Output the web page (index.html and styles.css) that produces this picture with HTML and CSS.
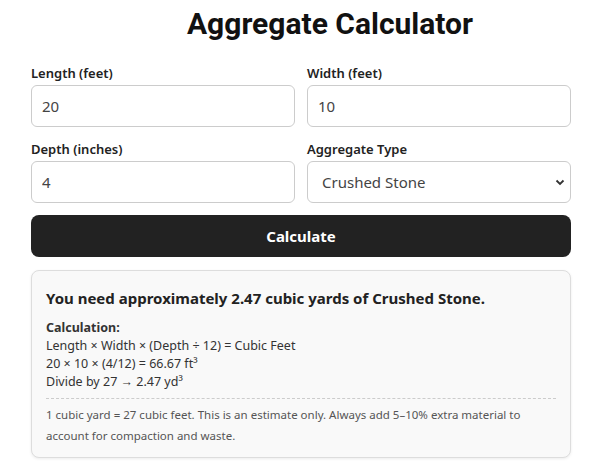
FILE: index.html
```html
<!DOCTYPE html>
<html lang="en">
<head>
    <meta charset="UTF-8">
    <meta name="viewport" content="width=device-width, initial-scale=1.0">
    <title>Aggregate Calculator</title>
    <link rel="stylesheet" href="styles.css">
</head>
<body>
    <div class="calculator">
        <h1>Aggregate Calculator</h1>
        <form class="calc-form">
            <div class="form-grid">
                <div class="form-group">
                    <label for="length">Length (feet)</label>
                    <input type="number" id="length" value="20">
                </div>
                <div class="form-group">
                    <label for="width">Width (feet)</label>
                    <input type="number" id="width" value="10">
                </div>
                <div class="form-group">
                    <label for="depth">Depth (inches)</label>
                    <input type="number" id="depth" value="4">
                </div>
                <div class="form-group">
                    <label for="type">Aggregate Type</label>
                    <div class="select-wrap">
                        <select id="type">
                            <option>Crushed Stone</option>
                            <option>Gravel</option>
                            <option>Sand</option>
                        </select>
                        <svg class="chevron" width="10" height="7" viewBox="0 0 10 7"><path d="M1.5 1.5 L5 5 L8.5 1.5" fill="none" stroke="#333" stroke-width="1.8"/></svg>
                    </div>
                </div>
            </div>
            <button type="button">Calculate</button>
        </form>
        <div class="result">
            <h3>You need approximately 2.47 cubic yards of Crushed Stone.</h3>
            <div class="breakdown">
                <strong>Calculation:</strong><br>
                Length × Width × (Depth ÷ 12) = Cubic Feet<br>
                20 × 10 × (4/12) = 66.67 ft³<br>
                Divide by 27 → 2.47 yd³
            </div>
            <p class="note">1 cubic yard = 27 cubic feet. This is an estimate only. Always add 5–10% extra material to account for compaction and waste.</p>
        </div>
    </div>
</body>
</html>
```

FILE: styles.css
```css
body {
    font-family: "Noto Sans", "Open Sans", sans-serif;
    margin: 0;
    background-color: #fff;
    color: #222;
}
.calculator {
    width: 540px;
    padding: 0 0 20px 31px;
}
h1 {
    font-family: Roboto, "Liberation Sans", sans-serif;
    font-size: 30px;
    font-weight: 700;
    color: #111;
    text-align: center;
    margin: 4px 0 21px;
    padding-left: 58px;
    line-height: 40px;
}
.form-grid {
    display: grid;
    grid-template-columns: 1fr 1fr;
    column-gap: 12px;
    row-gap: 14px;
}
.form-group label {
    display: block;
    font-size: 13px;
    font-weight: 600;
    margin-bottom: 3px;
    line-height: 17px;
}
input, select {
    width: 100%;
    height: 42px;
    padding: 0 10px;
    border: 1px solid #ccc;
    border-radius: 6px;
    box-sizing: border-box;
    font-family: inherit;
    font-size: 15px;
    color: #444;
    background: #fff;
}
input::-webkit-outer-spin-button,
input::-webkit-inner-spin-button {
    -webkit-appearance: none;
    margin: 0;
}
input[type=number] {
    -moz-appearance: textfield;
}
.select-wrap {
    position: relative;
}
select {
    appearance: none;
    -webkit-appearance: none;
    padding-left: 14px;
}
.chevron {
    position: absolute;
    right: 6px;
    top: 18px;
    pointer-events: none;
}
button {
    display: block;
    width: 100%;
    height: 42px;
    margin-top: 12px;
    background-color: #222;
    color: #fff;
    border: none;
    border-radius: 8px;
    font-family: inherit;
    font-size: 15px;
    font-weight: 700;
    cursor: pointer;
}
.result {
    margin-top: 13px;
    background-color: #f9f9f9;
    border: 1px solid #ddd;
    border-radius: 8px;
    box-shadow: 0 1px 3px rgba(0,0,0,0.08);
    padding: 14px 14px 11px;
}
.result h3 {
    font-size: 15px;
    font-weight: 700;
    margin: 2px 0 10px;
    color: #222;
    line-height: 22px;
}
.breakdown {
    font-size: 12.5px;
    line-height: 18px;
    color: #333;
    padding-bottom: 7px;
    border-bottom: 1px dashed #ccc;
}
.note {
    font-size: 11.5px;
    line-height: 21px;
    color: #555;
    margin: 5px 0 0;
}
```
